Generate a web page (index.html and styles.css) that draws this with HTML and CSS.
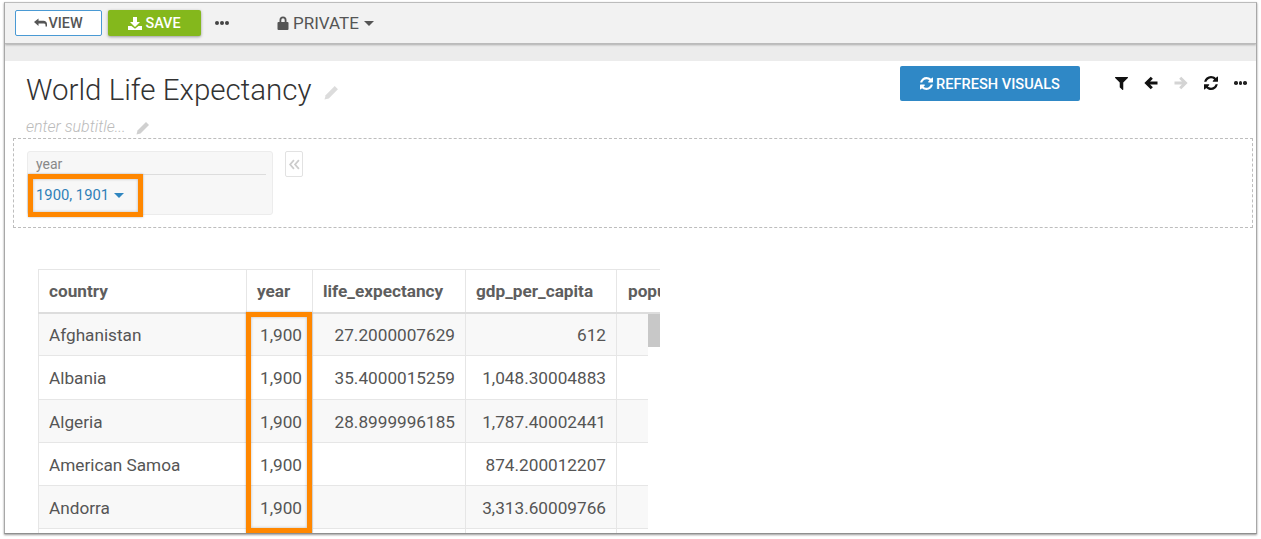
FILE: index.html
```html
<!DOCTYPE html>
<html lang="en">
<head>
<meta charset="utf-8">
<title>World Life Expectancy</title>
<link rel="stylesheet" href="styles.css">
</head>
<body>
<div class="frame">
  <div class="tab-mark"></div>
  <header class="toolbar">
    <button class="btn btn-view"><svg class="ic" width="13" height="10" viewBox="0 0 13 10"><path d="M0 4l4.500-3.600v2.400h5c2 0 3.500 1.200 3.500 3.400v2.300h-1.500v-1.500c0-1-.7-1.500-2-1.500h-5v2.400z" fill="#555"/></svg>VIEW</button>
    <button class="btn btn-save"><svg class="ic" width="14" height="13" viewBox="0 0 14 13"><path d="M5 0h4v5h3l-5 5-5-5h3z" fill="#fff"/><path d="M0 9h3.500l3.500 2.800L10.500 9H14v4H0z" fill="#fff"/></svg>SAVE</button>
    <span class="dots dots-bar"><i></i><i></i><i></i></span>
    <span class="private"><svg class="ic" width="12" height="14" viewBox="0 0 12 14"><path d="M2.500 6V4a3.500 3.500 0 0 1 7 0v2h-1.800V4a1.700 1.700 0 0 0-3.400 0v2z" fill="#555"/><rect x="0.500" y="6" width="11" height="8" rx="1" fill="#555"/></svg>PRIVATE<span class="caret caret-dark"></span></span>
  </header>
  <div class="band"></div>
  <main class="content">
    <div class="head-row">
      <div class="titles">
        <h1 class="title">World Life Expectancy<svg class="pencil pencil-lg" viewBox="0 0 14 14"><path d="M10 1l3 3-8.500 8.500L.500 13.500l1-4z" fill="#dcdcdc"/></svg></h1>
        <p class="subtitle">enter subtitle...<svg class="pencil pencil-sm" viewBox="0 0 14 14"><path d="M10 1l3 3-8.500 8.500L.500 13.500l1-4z" fill="#d0d0d0"/></svg></p>
      </div>
      <button class="btn-refresh"><svg class="ic" width="13" height="13" viewBox="0 0 1536 1536"><path fill="#fff" d="M1511 928q0 5-1 7-64 268-268 434.500t-478 166.500q-146 0-282.500-55t-243.500-157l-129 129q-19 19-45 19t-45-19-19-45v-448q0-26 19-45t45-19h448q26 0 45 19t19 45-19 45l-137 137q71 66 161 102t187 36q134 0 250-65t186-179q11-17 53-117 8-23 30-23h192q13 0 22.500 9.500t9.500 22.500zm25-800v448q0 26-19 45t-45 19h-448q-26 0-45-19t-19-45 19-45l138-138q-148-137-349-137-134 0-250 65t-186 179q-11 17-53 117-8 23-30 23h-199q-13 0-22.500-9.500t-9.500-22.500v-7q65-268 270-434.500t480-166.500q146 0 284 55.500t245 156.500l130-129q19-19 45-19t45 19 19 45z"/></svg>REFRESH VISUALS</button>
      <div class="actions">
        <svg width="13" height="13" viewBox="0 128 1408 1408"><path d="M1403 167q17 41-14 70l-493 493v742q0 42-39 59-13 5-25 5-27 0-45-19l-256-256q-19-19-19-45v-486l-493-493q-31-29-14-70 17-39 59-39h1280q42 0 59 39z" fill="#111"/></svg>
        <svg width="14" height="14" viewBox="0 0 14 14"><path d="M13.500 7H2.500M7.800 1.700L2.500 7l5.300 5.300" fill="none" stroke="#111" stroke-width="3"/></svg>
        <svg width="14" height="14" viewBox="0 0 14 14"><path d="M.500 7h11M6.200 1.700L11.500 7l-5.300 5.300" fill="none" stroke="#d4d4d4" stroke-width="3"/></svg>
        <svg width="14" height="14" viewBox="0 0 1536 1536"><path fill="#111" d="M1511 928q0 5-1 7-64 268-268 434.500t-478 166.500q-146 0-282.500-55t-243.500-157l-129 129q-19 19-45 19t-45-19-19-45v-448q0-26 19-45t45-19h448q26 0 45 19t19 45-19 45l-137 137q71 66 161 102t187 36q134 0 250-65t186-179q11-17 53-117 8-23 30-23h192q13 0 22.500 9.500t9.500 22.500zm25-800v448q0 26-19 45t-45 19h-448q-26 0-45-19t-19-45 19-45l138-138q-148-137-349-137-134 0-250 65t-186 179q-11 17-53 117-8 23-30 23h-199q-13 0-22.500-9.500t-9.500-22.500v-7q65-268 270-434.500t480-166.500q146 0 284 55.500t245 156.500l130-129q19-19 45-19t45 19 19 45z"/></svg>
        <span class="dots dots-act"><i></i><i></i><i></i></span>
      </div>
    </div>
    <section class="filter-zone">
      <div class="filter-card">
        <div class="filter-label">year</div>
        <div class="filter-value">1900, 1901<span class="caret caret-blue"></span></div>
        <div class="hl hl-filter"></div>
      </div>
      <div class="collapse"><svg width="11" height="11" viewBox="0 0 10 10"><path d="M4.500 1L1 5l3.500 4M9 1L5.500 5 9 9" fill="none" stroke="#ccc" stroke-width="1.600"/></svg></div>
    </section>
    <section class="table-wrap">
      <table class="grid">
        <colgroup><col class="c1"><col class="c2"><col class="c3"><col class="c4"><col class="c5"></colgroup>
        <thead>
          <tr><th>country</th><th>year</th><th>life_expectancy</th><th>gdp_per_capita</th><th class="th-last">population</th></tr>
        </thead>
        <tbody>
          <tr><td>Afghanistan</td><td class="n">1,900</td><td class="n">27.2000007629</td><td class="n">612</td><td></td></tr>
          <tr><td>Albania</td><td class="n">1,900</td><td class="n">35.4000015259</td><td class="n">1,048.30004883</td><td></td></tr>
          <tr><td>Algeria</td><td class="n">1,900</td><td class="n">28.8999996185</td><td class="n">1,787.40002441</td><td></td></tr>
          <tr><td>American Samoa</td><td class="n">1,900</td><td></td><td class="n">874.200012207</td><td></td></tr>
          <tr><td>Andorra</td><td class="n">1,900</td><td></td><td class="n">3,313.60009766</td><td></td></tr>
          <tr><td></td><td></td><td></td><td></td><td></td></tr>
        </tbody>
      </table>
      <div class="body-mask"></div>
      <div class="scroll-thumb"></div>
      <div class="hl hl-year"></div>
    </section>
  </main>
</div>
</body>
</html>
```
FILE: styles.css
```css
* { box-sizing: border-box; }
html, body { margin: 0; height: 539px; overflow: hidden; background: #fff; }
body { padding: 2px 4px 5px 4px; font-family: Roboto, "Liberation Sans", sans-serif; color: #555; }
.frame { position: relative; height: 532px; border: 1px solid #a8a8a8; border-bottom-color: #8f8f8f; border-top-color: #bcbcbc; overflow: hidden; background: #fff; box-shadow: 0 1px 2px #999; }
.tab-mark { position: absolute; left: 367px; top: 0; width: 108px; height: 2px; background: #a3a5a8; }
.toolbar { display: flex; align-items: center; height: 41px; padding: 0 10px; background: #f2f2f2; border-bottom: 1px solid #bbb; box-shadow: 0 1px 2px #aaa; position: relative; }
.btn { display: flex; align-items: center; justify-content: center; height: 26px; padding: 0; font: 500 14.400px Roboto, sans-serif; border-radius: 2px; }
.ic { margin-right: 3px; flex: none; }
.btn-view { width: 87px; background: #fff; border: 1px solid #4a9ad4; color: #555; }
.btn-view .ic { margin-right: 1px; }
.btn-save { width: 93px; margin-left: 6px; background: #84b81c; border: 0; color: #fff; box-shadow: 0 1px 3px #999; }
.dots { display: inline-flex; gap: 1px; }
.dots i { width: 4px; height: 4px; background: #444; border-radius: 50%; }
.dots-bar { margin-left: 14px; }
.private { display: flex; align-items: center; margin-left: 48px; font-size: 17px; color: #555; }
.private .ic { margin-right: 4px; }
.caret { display: inline-block; width: 0; height: 0; border-left: 5px solid transparent; border-right: 5px solid transparent; border-top: 5px solid #555; margin-left: 5px; }
.caret-blue { border-top-color: #2f86c0; }
.band { height: 17px; background: #ececec; }
.content { position: relative; padding: 0 3px 0 8px; }
.head-row { display: flex; align-items: flex-start; height: 77px; }
.titles { flex: 1; padding-left: 13px; white-space: nowrap; }
.title { margin: 12px 0 0; font: 300 29.500px/34px Roboto, sans-serif; color: #333; }
.subtitle { margin: 11px 0 0; font: italic 300 16px/18px Roboto, sans-serif; color: #bbb; }
.pencil { display: inline-block; vertical-align: middle; }
.pencil-lg { width: 15px; height: 15px; margin-left: 13px; }
.pencil-sm { width: 14px; height: 14px; margin-left: 10px; }
.btn-refresh { display: flex; align-items: center; justify-content: center; flex: none; width: 180px; height: 35px; margin-top: 5px; padding: 0; border: 0; border-radius: 2px; background: #2f88c6; color: #fff; font: 500 14.600px Roboto, sans-serif; }
.actions { display: flex; align-items: center; gap: 16px; flex: none; width: 138px; height: 14px; margin: 15px 0 0 35px; }
.dots-act i { width: 3.500px; height: 3.500px; background: #222; }
.filter-zone { display: flex; align-items: flex-start; height: 90px; padding: 12px 0 0 13px; border: 1px dashed #bdbdbd; }
.filter-card { position: relative; width: 246px; height: 64px; padding: 0 6px 0 8px; background: #f7f7f7; border: 1px solid #ececec; border-radius: 3px; }
.filter-label { height: 23px; font-size: 14px; line-height: 24px; color: #888; border-bottom: 1px solid #ddd; }
.filter-value { display: flex; align-items: center; height: 40px; font-size: 14.800px; color: #2f7fb8; }
.hl { position: absolute; border: 5px solid #ff8700; box-shadow: 0 0 2px rgba(0,0,0,.3), inset 0 0 3px rgba(0,0,0,.25); pointer-events: none; }
.hl-filter { left: 0; top: 22px; width: 115px; height: 43px; }
.collapse { display: flex; align-items: center; justify-content: center; width: 18px; height: 26px; margin-left: 12px; border: 1px solid #e2e2e2; border-radius: 2px; }
.table-wrap { position: relative; width: 622px; height: 306px; margin: 41px 0 0 25px; overflow: hidden; }
.grid { width: 660px; table-layout: fixed; border-collapse: collapse; font-size: 17.200px; color: #555; }
.c1 { width: 208px; } .c2 { width: 66px; } .c3 { width: 153px; } .c4 { width: 151px; } .c5 { width: 82px; }
.grid th { height: 43px; padding: 0 10px; text-align: left; font-weight: 700; color: #5e5e5e; white-space: nowrap; border: 1px solid #e6e6e6; border-bottom: 2px solid #ddd; overflow: hidden; }
.grid th.th-last { padding-left: 11px; }
.grid td { height: 43.300px; padding: 2px 10px 0; border: 1px solid #e6e6e6; white-space: nowrap; }
.grid td.n { text-align: right; }
.grid tbody tr:nth-child(odd) td { background: #f8f8f8; }
.body-mask { position: absolute; left: 610px; top: 45px; width: 12px; height: 270px; background: #fff; }
.scroll-thumb { position: absolute; left: 610px; top: 45px; width: 12px; height: 33px; background: #c8c8c8; }
.hl-year { left: 208px; top: 43px; width: 66px; height: 221px; }
```
